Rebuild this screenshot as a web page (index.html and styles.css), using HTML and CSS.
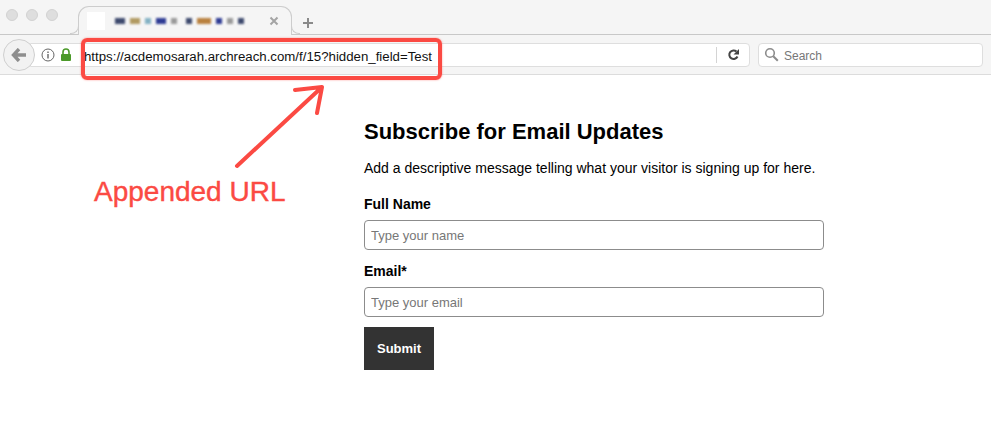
FILE: index.html
```html
<!DOCTYPE html>
<html>
<head>
    <title>Subscribe for Email Updates</title>
    <link rel="stylesheet" href="styles.css">
</head>
<body>
    <div class="browser">
        <div class="tabbar">
            <div class="lights"><span></span><span></span><span></span></div>
            <div class="tab">
                <div class="favicon"></div>
                <div class="tab-title">
                    <i class="wide c1"></i><i class="wide c2"></i><i class="c3"></i><i class="wide c4"></i><i class="c5"></i>
                    <i class="gap c1"></i><i class="wider c7"></i><i class="c4"></i><i class="c5"></i><i class="c1"></i>
                </div>
                <svg class="tab-close" width="10" height="10" viewBox="0 0 10 10"><path d="M1.500 1.500l7 7M8.500 1.500l-7 7" stroke="#a4a4a4" stroke-width="2"/></svg>
            </div>
            <svg class="newtab" width="12" height="12" viewBox="0 0 12 12"><path d="M6 1v10M1 6h10" stroke="#8a8a8a" stroke-width="2"/></svg>
        </div>
        <div class="navbar">
            <div class="back">
                <svg width="16" height="14" viewBox="0 0 16 14"><path d="M8 1L2.500 7 8 13M3 7H15" fill="none" stroke="#8e8e8e" stroke-width="3.400"/></svg>
            </div>
            <div class="urlbar">
                <svg class="info" width="14" height="14" viewBox="0 0 14 14"><circle cx="7" cy="7" r="6" fill="none" stroke="#666" stroke-width="1"/><path d="M7 6v4.500M7 3.500v1.500" stroke="#666" stroke-width="1.400"/></svg>
                <svg class="lock" width="12" height="13" viewBox="0 0 12 13"><path d="M3 6V4a3 3 0 0 1 6 0v2" fill="none" stroke="#4c9a2a" stroke-width="1.600"/><rect x="1" y="6" width="10" height="7" rx="1" fill="#4c9a2a"/></svg>
                <div class="url">https://acdemosarah.archreach.com/f/15?hidden_field=Test</div>
                <div class="reload">
                    <svg width="13" height="13" viewBox="0 0 13 13"><path d="M10.500 8.500A4.300 4.300 0 1 1 9.500 3.500" fill="none" stroke="#444" stroke-width="2"/><path d="M12 1v5.500H6.500z" fill="#444"/></svg>
                </div>
            </div>
            <div class="searchbar">
                <svg width="15" height="15" viewBox="0 0 15 15"><circle cx="6" cy="6" r="4.300" fill="none" stroke="#8c8c8c" stroke-width="1.600"/><path d="M9.300 9.300l4.500 4.500" stroke="#8c8c8c" stroke-width="2"/></svg>
                <span>Search</span>
            </div>
        </div>
    </div>

    <form class="signup">
        <h1>Subscribe for Email Updates</h1>
        <p>Add a descriptive message telling what your visitor is signing up for here.</p>
        <label>Full Name</label>
        <input type="text" placeholder="Type your name">
        <label>Email*</label>
        <input type="text" placeholder="Type your email">
        <button type="button">Submit</button>
    </form>

    <!-- red annotations on top of the screenshot -->
    <div class="url-highlight"></div>
    <svg class="arrow" width="100" height="90" viewBox="0 0 100 90"><path d="M6 83L91 4M64 7l27-3-5 26" fill="none" stroke="#fb4a43" stroke-width="4" stroke-linecap="round" stroke-linejoin="round"/></svg>
    <div class="appended">Appended URL</div>
</body>
</html>
```

FILE: styles.css
```css
body {
    font-family: "Liberation Sans", Arial, sans-serif;
    margin: 0;
    background-color: white;
    height: 426px;
    overflow: hidden;
}
.browser {
    background-color: #f5f5f5;
    border-bottom: 1px solid #dcdcdc;
}
.tabbar {
    display: flex;
    align-items: flex-end;
    height: 34px;
    border-bottom: 1px solid #c8c8c8;
    padding-left: 6px;
}
.lights {
    display: flex;
    gap: 8px;
    align-self: flex-start;
    margin-top: 9px;
    width: 72px;
}
.lights span {
    width: 12px;
    height: 12px;
    border-radius: 50%;
    background-color: #dedede;
    border: 0.5px solid #d2d2d2;
    box-sizing: border-box;
}
.tab {
    display: flex;
    align-items: center;
    position: relative;
    width: 214px;
    height: 29px;
    margin-bottom: -1px;
    box-sizing: border-box;
    background-color: #f5f5f5;
    border: 1px solid #cdcdcd;
    border-bottom: none;
    border-radius: 11px 11px 0 0;
    padding: 0 12px 0 8px;
}
/* flared bottom corners of the tab */
.tab::before,
.tab::after {
    content: "";
    position: absolute;
    bottom: 1px;
    width: 8px;
    height: 8px;
    border-bottom: 1px solid #cdcdcd;
}
.tab::before {
    left: -9px;
    border-right: 1px solid #cdcdcd;
    border-bottom-right-radius: 8px;
}
.tab::after {
    right: -9px;
    border-left: 1px solid #cdcdcd;
    border-bottom-left-radius: 8px;
}
.favicon {
    width: 18px;
    height: 18px;
    background-color: white;
    margin-right: 10px;
}
.tab-title {
    display: flex;
    gap: 5px;
    flex: 1;
    filter: blur(1.300px);
}
.tab-title i {
    width: 6px;
    height: 6px;
}
.tab-title .wide {
    width: 10px;
}
.tab-title .wider {
    width: 14px;
}
.tab-title .gap {
    margin-left: 4px;
}
.c1 { background-color: #3e4a6e; }
.c2 { background-color: #b19a62; }
.c3 { background-color: #84b2c4; }
.c4 { background-color: #2f3c94; }
.c5 { background-color: #9a9a9a; }
.c7 { background-color: #b9813f; }
.newtab {
    margin: 0 0 5px 10px;
}
.navbar {
    display: flex;
    align-items: center;
    height: 39px;
    padding: 0 8px 0 3px;
}
.back {
    display: flex;
    align-items: center;
    justify-content: center;
    width: 32px;
    height: 32px;
    box-sizing: border-box;
    border: 1px solid #cfcfcf;
    border-radius: 50%;
    background-color: #f2f2f2;
    position: relative;
    z-index: 1;
    margin-right: -5px;
}
.urlbar {
    display: flex;
    align-items: center;
    width: 720px;
    height: 24px;
    box-sizing: border-box;
    background-color: white;
    border: 1px solid #dedede;
    border-radius: 0 4px 4px 0;
    padding-left: 10px;
}
.info {
    margin-right: 5px;
}
.lock {
    margin-right: 12px;
}
.url {
    flex: 1;
    font-size: 13.250px;
    padding-top: 3px;
    color: #111;
    white-space: nowrap;
}
.reload {
    display: flex;
    align-items: center;
    justify-content: center;
    width: 32px;
    height: 16px;
    border-left: 1px solid #d4d4d4;
}
.searchbar {
    display: flex;
    align-items: center;
    gap: 5px;
    width: 225px;
    height: 24px;
    box-sizing: border-box;
    margin-left: 8px;
    padding-left: 5px;
    background-color: white;
    border: 1px solid #dedede;
    border-radius: 4px;
    font-size: 12px;
    color: #777;
}
.searchbar span {
    padding-top: 2px;
}
.signup {
    display: flex;
    flex-direction: column;
    align-items: flex-start;
    width: 460px;
    margin-left: 364px;
    padding-top: 44px;
}
.signup h1 {
    font-size: 22px;
    line-height: 25px;
    margin: 0 0 14px 0;
    color: black;
}
.signup p {
    font-size: 14px;
    line-height: 20px;
    margin: 0 0 16px 0;
    color: black;
}
.signup label {
    font-size: 14px;
    font-weight: bold;
    line-height: 20px;
    margin-bottom: 6px;
    color: black;
}
.signup input {
    width: 100%;
    height: 30px;
    box-sizing: border-box;
    border: 1px solid #8c8c8c;
    border-radius: 4px;
    padding: 0 6px;
    margin: 0 0 11px 0;
    font-family: "Liberation Sans", Arial, sans-serif;
    font-size: 13px;
}
.signup input:last-of-type {
    margin-bottom: 10px;
}
.signup input::placeholder {
    color: #777;
}
.signup button {
    width: 70px;
    height: 43px;
    border: none;
    background-color: #333;
    color: white;
    font-family: "Liberation Sans", Arial, sans-serif;
    font-size: 13px;
    font-weight: bold;
}
.url-highlight {
    position: absolute;
    left: 81px;
    top: 38px;
    width: 361px;
    height: 42px;
    box-sizing: border-box;
    border: 4px solid #fb4a43;
    border-radius: 6px;
    box-shadow: 0 0 2px rgba(251, 74, 67, 0.6);
}
.arrow {
    position: absolute;
    left: 231px;
    top: 83px;
}
.appended {
    position: absolute;
    left: 94px;
    top: 176px;
    font-size: 28px;
    line-height: 32px;
    color: #fb4a43;
    -webkit-text-stroke: 0.400px #fb4a43;
}
```
